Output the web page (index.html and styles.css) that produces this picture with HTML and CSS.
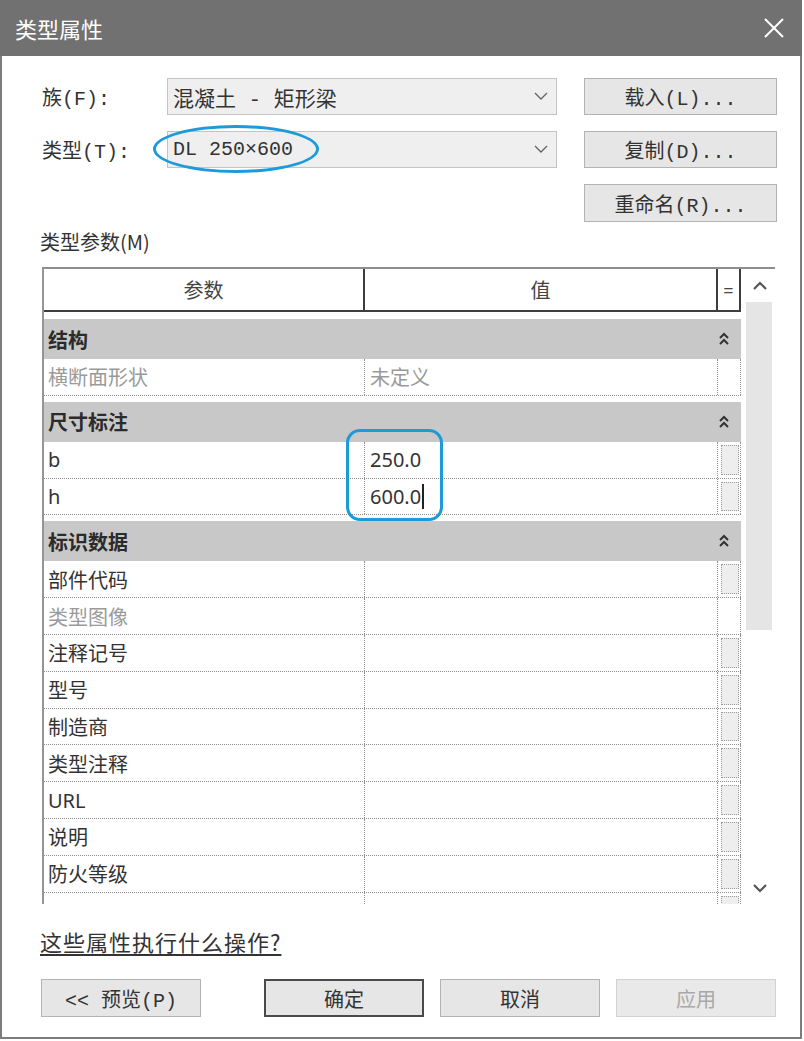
FILE: index.html
```html
<!DOCTYPE html>
<html lang="zh-CN">
<head>
  <meta charset="UTF-8" />
  <title>类型属性</title>
  <link rel="stylesheet" href="styles.css">
</head>
<body>
  <div class="dialog">
    <div class="titlebar">
      <span class="title">类型属性</span>
      <svg class="close" width="22" height="22" viewBox="0 0 22 22">
        <path d="M2 2 L20 20 M20 2 L2 20" stroke="#fff" stroke-width="2" fill="none" />
      </svg>
    </div>

    <div class="content">
      <div class="type-form">
        <span class="form-label">族(F):</span>
        <div class="combo">
          <span class="combo-text">混凝土 - 矩形梁</span>
          <svg class="combo-arrow" width="14" height="9" viewBox="0 0 14 9">
            <polyline points="1,1 7,7 13,1" stroke="#666" stroke-width="1.4" fill="none" />
          </svg>
        </div>
        <button class="btn">载入(L)...</button>

        <span class="form-label">类型(T):</span>
        <div class="combo combo-type">
          <span class="combo-text">DL 250×600</span>
          <svg class="combo-arrow" width="14" height="9" viewBox="0 0 14 9">
            <polyline points="1,1 7,7 13,1" stroke="#666" stroke-width="1.4" fill="none" />
          </svg>
          <span class="mark-ellipse"></span>
        </div>
        <button class="btn">复制(D)...</button>

        <button class="btn btn-rename">重命名(R)...</button>
      </div>

      <div class="params-label">类型参数(M)</div>

      <div class="params">
        <div class="grid">
          <div class="grid-head">
            <div class="head-cell">参数</div>
            <div class="head-cell">值</div>
            <div class="head-cell head-eq">=</div>
          </div>

          <div class="group">
            <span class="group-name">结构</span>
            <svg class="collapse" width="12" height="14" viewBox="0 0 12 14">
              <polyline points="2,6 6,2 10,6" stroke="#333" stroke-width="2" fill="none" />
              <polyline points="2,12 6,8 10,12" stroke="#333" stroke-width="2" fill="none" />
            </svg>
          </div>
          <div class="row muted">
            <div class="cell name">横断面形状</div>
            <div class="cell value">未定义</div>
            <div class="cell eq"></div>
          </div>

          <div class="group">
            <span class="group-name">尺寸标注</span>
            <svg class="collapse" width="12" height="14" viewBox="0 0 12 14">
              <polyline points="2,6 6,2 10,6" stroke="#333" stroke-width="2" fill="none" />
              <polyline points="2,12 6,8 10,12" stroke="#333" stroke-width="2" fill="none" />
            </svg>
          </div>
          <div class="row">
            <div class="cell name">b</div>
            <div class="cell value value-marked">250.0<span class="mark-box"></span></div>
            <div class="cell eq"><span class="eq-box"></span></div>
          </div>
          <div class="row">
            <div class="cell name">h</div>
            <div class="cell value">600.0<span class="caret"></span></div>
            <div class="cell eq"><span class="eq-box"></span></div>
          </div>

          <div class="group">
            <span class="group-name">标识数据</span>
            <svg class="collapse" width="12" height="14" viewBox="0 0 12 14">
              <polyline points="2,6 6,2 10,6" stroke="#333" stroke-width="2" fill="none" />
              <polyline points="2,12 6,8 10,12" stroke="#333" stroke-width="2" fill="none" />
            </svg>
          </div>
          <div class="row">
            <div class="cell name">部件代码</div>
            <div class="cell value"></div>
            <div class="cell eq"><span class="eq-box"></span></div>
          </div>
          <div class="row muted">
            <div class="cell name">类型图像</div>
            <div class="cell value"></div>
            <div class="cell eq"></div>
          </div>
          <div class="row">
            <div class="cell name">注释记号</div>
            <div class="cell value"></div>
            <div class="cell eq"><span class="eq-box"></span></div>
          </div>
          <div class="row">
            <div class="cell name">型号</div>
            <div class="cell value"></div>
            <div class="cell eq"><span class="eq-box"></span></div>
          </div>
          <div class="row">
            <div class="cell name">制造商</div>
            <div class="cell value"></div>
            <div class="cell eq"><span class="eq-box"></span></div>
          </div>
          <div class="row">
            <div class="cell name">类型注释</div>
            <div class="cell value"></div>
            <div class="cell eq"><span class="eq-box"></span></div>
          </div>
          <div class="row">
            <div class="cell name">URL</div>
            <div class="cell value"></div>
            <div class="cell eq"><span class="eq-box"></span></div>
          </div>
          <div class="row">
            <div class="cell name">说明</div>
            <div class="cell value"></div>
            <div class="cell eq"><span class="eq-box"></span></div>
          </div>
          <div class="row">
            <div class="cell name">防火等级</div>
            <div class="cell value"></div>
            <div class="cell eq"><span class="eq-box"></span></div>
          </div>
          <div class="row">
            <div class="cell name"></div>
            <div class="cell value"></div>
            <div class="cell eq"><span class="eq-box"></span></div>
          </div>
        </div>

        <div class="scrollbar">
          <div class="scroll-btn">
            <svg width="16" height="10" viewBox="0 0 16 10">
              <polyline points="2,8 8,2 14,8" stroke="#555" stroke-width="2.2" fill="none" />
            </svg>
          </div>
          <div class="scroll-thumb"></div>
          <div class="scroll-space"></div>
          <div class="scroll-btn">
            <svg width="16" height="10" viewBox="0 0 16 10">
              <polyline points="2,2 8,8 14,2" stroke="#555" stroke-width="2.2" fill="none" />
            </svg>
          </div>
        </div>
      </div>

      <a class="help-link" href="#">这些属性执行什么操作?</a>

      <div class="actions">
        <button class="btn btn-wide btn-preview">&lt;&lt; 预览(P)</button>
        <button class="btn btn-wide btn-default">确定</button>
        <button class="btn btn-wide">取消</button>
        <button class="btn btn-wide btn-disabled">应用</button>
      </div>
    </div>
  </div>
</body>
</html>
```

FILE: styles.css
```css
body {
  margin: 0;
  font-family: "Noto Sans", "Noto Sans CJK SC", sans-serif;
  color: #333;
  background: #fff;
}
.dialog {
  width: 802px;
  height: 1039px;
  display: flex;
  flex-direction: column;
}
.titlebar {
  height: 56px;
  flex-shrink: 0;
  background: #717171;
  display: flex;
  align-items: center;
  justify-content: space-between;
  padding: 0 17px 0 15px;
}
.title {
  color: #fff;
  font-family: "Noto Sans CJK SC", sans-serif;
  font-size: 22px;
}
.close {
  display: block;
}
.content {
  flex: 1;
  border: 2px solid #7d7d7d;
  border-top: 0;
  padding: 22px 0 0 38px;
}

/* top form: family / type */
.type-form {
  display: grid;
  grid-template-columns: 100px 390px 193px;
  grid-template-rows: 37px 37px 37px;
  column-gap: 27px;
  row-gap: 16px;
  align-items: stretch;
}
.form-label,
.btn,
.combo-text,
.params-label,
.help-link {
  font-family: "Liberation Mono", "Noto Sans CJK SC", monospace;
  font-size: 20px;
  color: #333;
}
.form-label {
  display: flex;
  align-items: center;
  padding-left: 2px;
}
.combo {
  position: relative;
  display: flex;
  align-items: center;
  justify-content: space-between;
  background: #efefef;
  border: 1px solid #c4c4c4;
  padding: 0 8px 0 5px;
}
.combo-text {
  font-size: 21px;
}
.combo-type .combo-text {
  font-size: 20px;
}
.mark-ellipse {
  position: absolute;
  left: -15px;
  top: -7px;
  width: 166px;
  height: 48px;
  box-sizing: border-box;
  border: 3px solid #1c9bd8;
  border-radius: 50%;
}
.btn {
  background: #e6e6e6;
  border: 1px solid #b3b3b3;
  padding: 0;
  margin: 0;
  font-size: 20px;
  cursor: default;
}
.btn-rename {
  grid-column: 3;
  grid-row: 3;
  height: 38px;
}
.params-label {
  margin: 7px 0 11px;
  height: 28px;
  line-height: 28px;
  font-family: "Noto Sans CJK SC", sans-serif;
}

/* parameter table */
.params {
  margin-left: 2px;
  width: 733px;
  height: 635px;
  border-top: 2px solid #8e8e8e;
  display: flex;
}
.grid {
  width: 699px;
  height: 635px;
  overflow: hidden;
  border-left: 2px solid #959595;
  box-sizing: border-box;
}
.grid-head,
.row {
  display: grid;
  grid-template-columns: 321px 353px 23px;
}
.grid-head {
  height: 43px;
  box-sizing: border-box;
  border-bottom: 2px solid #3d3d3d;
  margin-left: -2px;
  border-left: 2px solid #3d3d3d;
}
.head-cell {
  display: flex;
  align-items: center;
  justify-content: center;
  border-right: 2px solid #3d3d3d;
  font-family: "Noto Sans CJK SC", sans-serif;
  font-size: 20px;
  color: #444;
}
.head-eq {
  font-family: "Noto Sans", sans-serif;
  font-size: 18px;
}
.group {
  margin-top: 7px;
  height: 40px;
  background: #c8c8c8;
  display: flex;
  align-items: center;
  justify-content: space-between;
  padding: 0 11px 0 4px;
}
.row + .group {
  margin-top: 6px;
}
.group-name {
  font-family: "Noto Sans CJK SC", sans-serif;
  font-weight: 700;
  font-size: 20px;
  color: #2b2b2b;
}
.collapse {
  display: block;
}
.row {
  height: 36.8px;
  box-sizing: border-box;
  border-bottom: 1px dotted #8f8f8f;
  font-size: 20px;
}
.cell {
  border-right: 1px dotted #8f8f8f;
  display: flex;
  align-items: center;
  color: #333;
}
.name {
  padding-left: 4px;
}
.value {
  padding-left: 5px;
}
.muted .cell {
  color: #9a9a9a;
}
.value-marked {
  position: relative;
}
.mark-box {
  position: absolute;
  left: -19px;
  top: -13px;
  width: 97px;
  height: 92px;
  box-sizing: border-box;
  border: 3px solid #1c9bd8;
  border-radius: 14px;
}
.caret {
  display: inline-block;
  width: 2px;
  height: 25px;
  background: #222;
  margin-left: 1px;
}
.eq {
  padding: 3px 1px 3px 3px;
  align-items: stretch;
}
.eq-box {
  flex: 1;
  background: #eeeeee;
  border: 1px dotted #9a9a9a;
}

/* scrollbar */
.scrollbar {
  width: 34px;
  display: flex;
  flex-direction: column;
}
.scroll-btn {
  height: 33px;
  display: flex;
  align-items: center;
  justify-content: center;
  padding-left: 4px;
}
.scroll-thumb {
  height: 328px;
  margin: 0 3px 0 5px;
  background: #e5e5e5;
}
.scroll-space {
  flex: 1;
}

/* footer */
.help-link {
  display: inline-block;
  margin-top: 22px;
  height: 30px;
  line-height: 30px;
  font-size: 22px;
  letter-spacing: 1px;
  font-family: "Noto Sans CJK SC", sans-serif;
  color: #333;
  text-decoration: underline;
  text-decoration-thickness: 2px;
  text-underline-offset: 3px;
}
.actions {
  display: flex;
  gap: 16px;
  margin-top: 23px;
  margin-left: 1px;
}
.btn-wide {
  width: 160px;
  height: 38px;
}
.btn-preview {
  margin-right: 47px;
}
.btn-default {
  border: 2px solid #4a4a4a;
}
.btn-disabled {
  background: #e9e9e9;
  border-color: #d2d2d2;
  color: #a8a8a8;
}
```
